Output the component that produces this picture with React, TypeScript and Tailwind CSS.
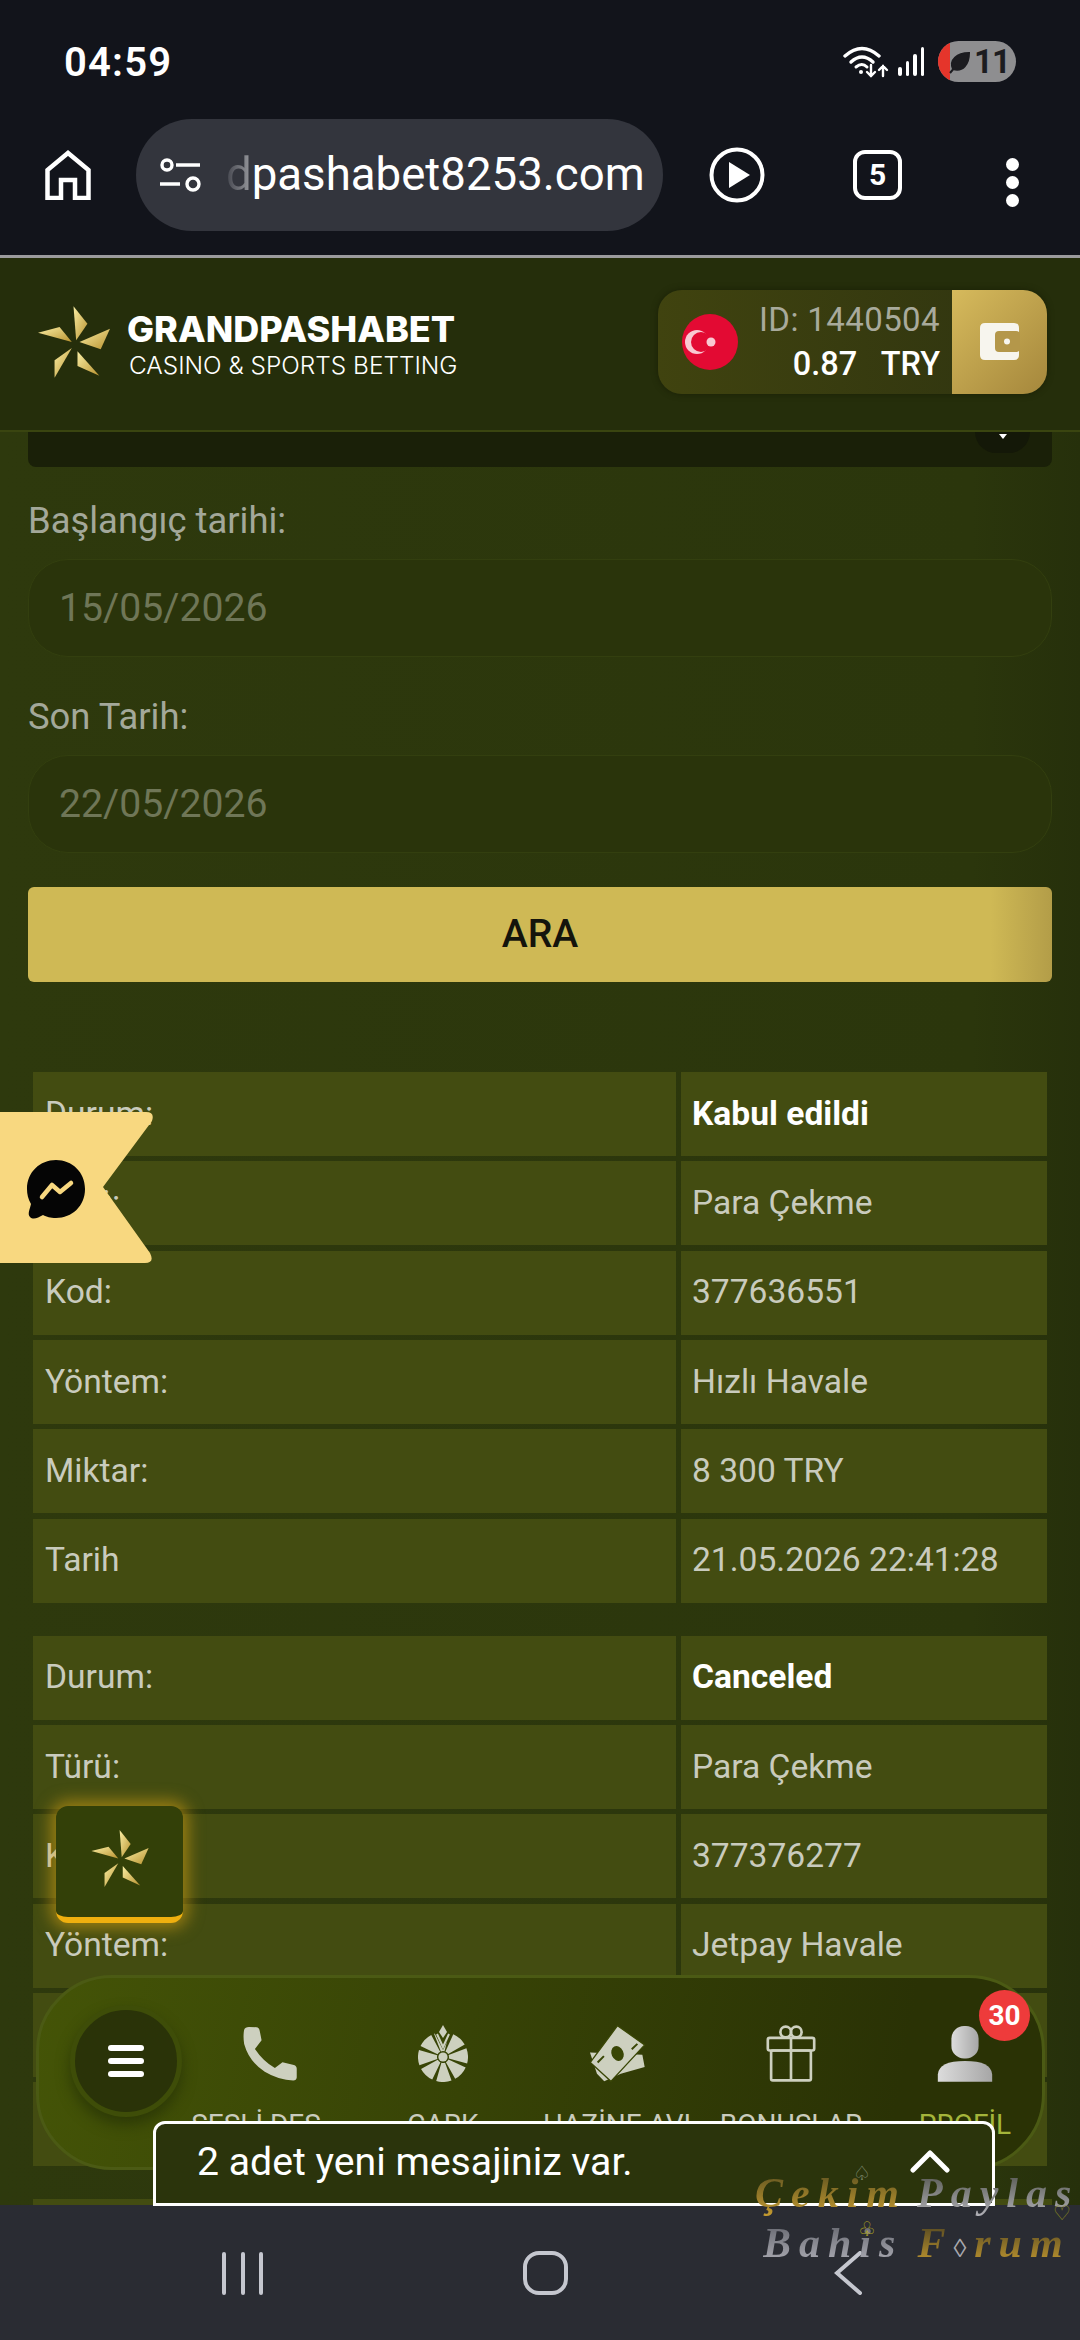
import React from 'react';

const rows1 = [
  ['Durum:', 'Kabul edildi'],
  ['Türü:', 'Para Çekme'],
  ['Kod:', '377636551'],
  ['Yöntem:', 'Hızlı Havale'],
  ['Miktar:', '8 300 TRY'],
  ['Tarih', '21.05.2026 22:41:28'],
];

const rows2 = [
  ['Durum:', 'Canceled'],
  ['Türü:', 'Para Çekme'],
  ['Kod:', '377376277'],
  ['Yöntem:', 'Jetpay Havale'],
  ['Miktar:', '8 300 TRY'],
  ['Tarih', '20.05.2026 18:12:40'],
];

const Star: React.FC<{ id: string; className: string }> = ({ id, className }) => (
  <svg viewBox="113 82 217 216" className={className}>
    <defs>
      <linearGradient id={id} x1="0" y1="0" x2="1" y2="1">
        <stop offset="0" stopColor="#fbefa5" />
        <stop offset="1" stopColor="#b8922f" />
      </linearGradient>
    </defs>
    <g fill={`url(#${id})`}>
      <polygon points="220,82 262,135 228,185" />
      <polygon points="330,150 302,212 238,190" />
      <polygon points="232,218 298,292 232,262" />
      <polygon points="215,208 163,298 163,245" />
      <polygon points="113,162 178,145 215,190" />
    </g>
  </svg>
);

const Table: React.FC<{ rows: string[][] }> = ({ rows }) => (
  <div className="grid grid-cols-[643px_366px] gap-x-[5px] gap-y-[5.33px] auto-rows-[84px]">
    {rows.map((row, i) => (
      <React.Fragment key={row[0]}>
        <div className="flex items-center bg-[#434c11] pl-[12px] text-[33.6px] text-[#c9cbbd]">{row[0]}</div>
        <div
          className={
            i === 0
              ? 'flex items-center bg-[#434c11] pl-[11px] text-[33.6px] font-bold text-white'
              : 'flex items-center bg-[#434c11] pl-[11px] text-[33.6px] text-[#c9cbbd]'
          }
        >
          {row[1]}
        </div>
      </React.Fragment>
    ))}
  </div>
);

const PhoneIcon = () => (
  <svg viewBox="655 130 180 180" className="h-[57px] w-[57px]">
    <path
      d="M665 145 Q668 136 680 136 L704 137 Q712 138 714 148 L720 178 L699 206 Q725 245 762 266 L786 248 L822 256 Q831 259 831 268 L831 296 Q830 305 820 305 Q775 305 730 278 Q680 245 665 190 Q661 165 665 145 Z"
      fill="#cdd0bf"
    />
  </svg>
);

const WheelIcon = () => (
  <svg viewBox="0 0 50 57" className="h-[57px] w-[50px]">
    <circle cx="25" cy="32" r="15.5" fill="none" stroke="#cdd0bf" strokeWidth="19" strokeDasharray="9.6 2.57" transform="rotate(-111 25 32)" />
    <circle cx="25" cy="32" r="4.6" fill="#cdd0bf" />
    <path d="M15 5 L25 25 L35 5 Z" fill="#394605" />
    <path d="M25 0 L29 7 L25 13 L21 7 Z" fill="#cdd0bf" />
    <path d="M19 9 L25 22 L31 9" fill="none" stroke="#cdd0bf" strokeWidth="2" />
  </svg>
);

const MoneyIcon = () => (
  <svg viewBox="140 135 170 172" className="h-[57px] w-[57px]">
    <polygon points="142,218 300,225 307,262 235,282 185,305 163,282" fill="#cdd0bf" />
    <polygon points="225,137 307,195 205,305 143,248" fill="#cdd0bf" stroke="#394605" strokeWidth="4" />
    <ellipse cx="225" cy="221" rx="18" ry="23" fill="#394605" transform="rotate(-25 225 221)" />
    <path d="M165 248 L184 229 M268 208 L285 192" stroke="#394605" strokeWidth="6" />
  </svg>
);

const GiftIcon = () => (
  <svg viewBox="655 135 150 172" className="h-[57px] w-[50px]" fill="none" stroke="#cdd0bf" strokeWidth="8" strokeLinejoin="round">
    <rect x="660" y="174" width="140" height="38" rx="6" />
    <rect x="670" y="212" width="120" height="90" rx="5" />
    <path d="M730 174 V302" />
    <circle cx="714" cy="156" r="16" />
    <circle cx="746" cy="156" r="16" />
  </svg>
);

const PersonIcon = () => (
  <svg viewBox="1145 135 168 172" className="h-[57px] w-[56px]">
    <defs>
      <linearGradient id="person" x1="0" y1="0" x2="1" y2="0">
        <stop offset="0" stopColor="#dcdcdc" />
        <stop offset="1" stopColor="#a6a6a6" />
      </linearGradient>
    </defs>
    <rect x="1188" y="138" width="82" height="98" rx="38" fill="url(#person)" />
    <path d="M1147 306 V284 Q1150 244 1229 244 Q1308 244 1311 284 V306 Z" fill="url(#person)" />
  </svg>
);

const navItems = [
  { label: 'SESLİ DES', icon: <PhoneIcon />, color: 'text-[#c9cbbd]', shift: 'mr-[26px]' },
  { label: 'ÇARK', icon: <WheelIcon />, color: 'text-[#c9cbbd]', shift: 'mr-0' },
  { label: 'HAZİNE AVI', icon: <MoneyIcon />, color: 'text-[#c9cbbd]', shift: 'mr-0' },
  { label: 'BONUSLAR', icon: <GiftIcon />, color: 'text-[#c9cbbd]', shift: 'mr-0' },
  { label: 'PROFİL', icon: <PersonIcon />, color: 'text-[#a4b53a]', shift: 'mr-0' },
];

export default function App() {
  return (
    <div className="relative flex h-[2340px] w-[1080px] flex-col overflow-hidden bg-[linear-gradient(90deg,#2e390d,#2b360c_90%,#26300b)] font-['Roboto',sans-serif]">
      {/* Status bar */}
      <div className="flex h-[119px] shrink-0 items-start justify-between bg-[#12141b] pl-[64px] pr-[64px] pt-[41px]">
        <span className="text-[40px] font-semibold leading-[44px] tracking-[1.2px] text-white">04:59</span>
        <div className="flex items-center">
          <svg viewBox="0 0 46 34" className="h-[34px] w-[46px]" fill="none" stroke="white" strokeLinecap="round">
            <path d="M2 11 Q19 -4 36 11" strokeWidth="3.4" />
            <path d="M8 17 Q19 7 30 17" strokeWidth="3.4" />
            <path d="M13 22 Q19 17 24 22" strokeWidth="3" />
            <circle cx="18" cy="27" r="2" fill="white" stroke="none" />
            <path d="M28 20 V31 M24 27 L28 31 L32 27" strokeWidth="2.4" />
            <path d="M40 31 V21 M36 25 L40 21 L44 25" strokeWidth="2.4" />
          </svg>
          <div className="ml-[9px] flex h-[29px] items-end gap-[4px]">
            <div className="h-[9px] w-[3.5px] rounded-sm bg-white" />
            <div className="h-[15px] w-[3.5px] rounded-sm bg-white" />
            <div className="h-[22px] w-[3.5px] rounded-sm bg-white" />
            <div className="h-[29px] w-[3.5px] rounded-sm bg-white" />
          </div>
          <div className="relative ml-[14px] flex h-[41px] w-[78px] items-center overflow-hidden rounded-full bg-[#8e8e90]">
            <div className="h-full w-[12px] bg-[#e5352b]" />
            <svg viewBox="0 0 24 24" className="absolute left-[9px] top-[9px] h-[24px] w-[24px]">
              <path d="M3 23 L8 17 M6 19 C2 10 10 3 22 3 C22 14 16 22 6 19 Z" fill="#1c1c20" stroke="#1c1c20" strokeWidth="2" />
            </svg>
            <span className="absolute left-[36px] top-0 text-[33px] font-bold leading-[41px] tracking-[-1px] text-[#1c1c20]">11</span>
          </div>
        </div>
      </div>

      {/* Browser bar */}
      <div className="flex h-[136px] shrink-0 items-start bg-[#12141b]">
        <svg viewBox="0 0 46 50" className="ml-[45px] mt-[31px] h-[50px] w-[46px]" fill="none" stroke="white" strokeWidth="4.5">
          <path d="M2.5 48 V20 L23 3 L43.5 20 V48 H30 V30 H16 V48 Z" />
        </svg>
        <div className="relative ml-[45px] flex h-[112px] w-[527px] items-center overflow-hidden rounded-full bg-[#33353d] pl-[24px]">
          <svg viewBox="0 0 41 34" className="h-[34px] w-[41px] shrink-0" fill="none" stroke="white" strokeWidth="3.4">
            <circle cx="7" cy="7" r="5" />
            <path d="M16 7 H40" />
            <path d="M0 26 H20" />
            <circle cx="33" cy="26" r="6" />
          </svg>
          <span className="ml-[25px] whitespace-nowrap text-[45.6px] leading-none text-white">
            <span className="bg-[linear-gradient(90deg,#44464e,#9a9ba0)] bg-clip-text text-transparent">d</span>
            pashabet8253.com
          </span>
        </div>
        <svg viewBox="0 0 56 56" className="ml-[46px] mt-[28px] h-[56px] w-[56px]">
          <circle cx="28" cy="28" r="25.5" fill="none" stroke="white" strokeWidth="4" />
          <path d="M20 15 L41 28 L20 41 Z" fill="white" />
        </svg>
        <div className="ml-[88px] mt-[31px] flex h-[50px] w-[49px] items-center justify-center rounded-[12px] border-[4px] border-white text-[30px] font-bold leading-none text-white">
          5
        </div>
        <div className="ml-[104px] mt-[39px] flex flex-col gap-[5px]">
          <div className="h-[13px] w-[13px] rounded-full bg-white" />
          <div className="h-[13px] w-[13px] rounded-full bg-white" />
          <div className="h-[13px] w-[13px] rounded-full bg-white" />
        </div>
      </div>
      <div className="h-[3px] shrink-0 bg-[#9b9b9d]" />

      {/* Site header */}
      <div className="flex h-[174px] shrink-0 items-center justify-between border-b-2 border-[#3a4510] bg-[#252e0b] pb-[5px] pl-[38px] pr-[33px]">
        <div className="flex items-center gap-[17px]">
          <Star id="logoStar" className="h-[72px] w-[72px]" />
          <div className="mt-[6px] flex flex-col font-['Inter',sans-serif] text-white">
            <span className="text-[36px] font-extrabold leading-[40px]">GRANDPASHABET</span>
            <span className="ml-[2px] text-[24.4px] font-light leading-[32px]">CASINO &amp; SPORTS BETTING</span>
          </div>
        </div>
        <div className="flex h-[104px] w-[389px] overflow-hidden rounded-[24px] bg-[linear-gradient(90deg,#40430f,#2f3410)] shadow-[0_0_6px_#1a2006]">
          <div className="flex flex-1 items-center justify-between pl-[24px] pr-[12px]">
            <svg viewBox="0 0 56 56" className="h-[56px] w-[56px]">
              <circle cx="28" cy="28" r="28" fill="#e30a33" />
              <circle cx="15" cy="28" r="12" fill="#f9c9d2" />
              <circle cx="19" cy="28" r="10" fill="#e30a33" />
              <circle cx="29" cy="28" r="4.5" fill="#f9c9d2" />
            </svg>
            <div className="flex flex-col items-end">
              <span className="text-[33px] leading-[44px] tracking-[0.4px] text-[#a8aa9c]">ID: 1440504</span>
              <span className="whitespace-pre text-[32.5px] font-medium leading-[44px] text-white">0.87{'   '}TRY</span>
            </div>
          </div>
          <div className="flex w-[95px] items-center justify-center bg-[linear-gradient(135deg,#d6ba5c,#a5873c)]">
            <svg viewBox="0 0 40 37" className="h-[37px] w-[40px]">
              <path d="M5 0 H34 Q39 0 39 5 V32 Q39 37 34 37 H5 Q0 37 0 32 V5 Q0 0 5 0 Z" fill="#f7f5ee" />
              <rect x="15" y="8" width="25" height="21" rx="4" fill="#b4974a" />
              <circle cx="27" cy="18.5" r="3" fill="#f7f5ee" />
            </svg>
          </div>
        </div>
      </div>

      {/* Page content */}
      <div className="flex min-h-0 flex-1 flex-col overflow-hidden px-[28px]">
        <div className="relative h-[35px] shrink-0 rounded-b-[8px] bg-[#1a2008]">
          <div className="absolute right-[22px] top-0 flex h-[21px] w-[55px] justify-center rounded-b-full bg-[#141808]">
            <div className="mt-[2px] h-0 w-0 border-x-[4px] border-t-[5px] border-x-transparent border-t-white" />
          </div>
        </div>
        <label className="mt-[32px] text-[36.4px] leading-[44px] text-[#a3a89a]">Başlangıç tarihi:</label>
        <div className="mt-[16px] flex h-[98px] shrink-0 items-center rounded-[40px] border border-[#333f0f] bg-[#2a340b] pl-[30px] text-[39.2px] text-[#6f7657]">
          15/05/2026
        </div>
        <label className="mt-[38px] text-[36.4px] leading-[44px] text-[#a3a89a]">Son Tarih:</label>
        <div className="mt-[16px] flex h-[98px] shrink-0 items-center rounded-[40px] border border-[#333f0f] bg-[#2a340b] pl-[30px] text-[39.2px] text-[#6f7657]">
          22/05/2026
        </div>
        <button className="mt-[34px] flex h-[95px] shrink-0 items-center justify-center rounded-[6px] bg-[linear-gradient(90deg,#cfb955_94%,#b39d48)] text-[39.2px] font-medium text-[#14140c]">
          ARA
        </button>
        <div className="ml-[5px] mt-[90px] flex flex-col gap-[33px]">
          <Table rows={rows1} />
          <Table rows={rows2} />
          <div className="h-[84px] bg-[#434c11]" />
        </div>
      </div>

      {/* Android nav bar */}
      <div className="relative z-10 flex h-[135px] shrink-0 items-start bg-[#2a2c33]">
        <div className="ml-[222px] mt-[47px] flex h-[43px] w-[41px] justify-between">
          <div className="h-full w-[4px] rounded-full bg-[#c5c7cf]" />
          <div className="h-full w-[4px] rounded-full bg-[#c5c7cf]" />
          <div className="h-full w-[4px] rounded-full bg-[#c5c7cf]" />
        </div>
        <div className="ml-[260px] mt-[46px] h-[44px] w-[45px] rounded-[16px] border-[4px] border-[#c5c7cf]" />
        <svg viewBox="0 0 28 44" className="ml-[266px] mt-[46px] h-[44px] w-[28px]" fill="none" stroke="#c5c7cf" strokeWidth="4" strokeLinecap="round">
          <path d="M26 2 L3 22 L26 42" />
        </svg>
      </div>

      {/* Messenger ribbon */}
      <svg viewBox="0 0 154 152" className="absolute left-0 top-[1112px] z-20 h-[152px] w-[154px]">
        <path d="M0 0 H146 Q155 0 152 9 L103 75 L150 141 Q155 151 145 151 H0 Z" fill="#f8d880" />
        <path d="M56 48 C72 48 85 60 85 77 C85 94 72 106 56 106 C50 106 47 105 43 103 C38 106 33 108 30 105 C27 102 30 97 31 92 C28 87 27 82 27 77 C27 60 40 48 56 48 Z" fill="#050505" />
        <path d="M42 85 L52 73 L60 80 L71 71" fill="none" stroke="#f8d880" strokeWidth="4.5" strokeLinecap="round" strokeLinejoin="round" />
      </svg>

      {/* Floating logo button */}
      <div className="absolute left-[56px] top-[1806px] z-20 flex h-[117px] w-[127px] items-center justify-center rounded-[12px] border-b-[6px] border-[#efb00f] bg-[#334008] pb-[6px] shadow-[0_0_16px_5px_rgba(230,170,20,0.55)]">
        <Star id="fabStar" className="h-[57px] w-[58px]" />
      </div>

      {/* Bottom menu */}
      <div className="absolute left-[36px] top-[1975px] z-20 flex h-[195px] w-[1009px] items-start rounded-[76px] border-[3px] border-[#4b5a14] bg-[linear-gradient(100deg,#445407,#2a3205_85%)] pl-[31px]">
        <div className="mt-[27px] flex h-[112px] w-[112px] shrink-0 flex-col items-center justify-center gap-[7px] rounded-full border-[5px] border-[#3e4d08] bg-[#2a3308] shadow-[0_8px_14px_rgba(30,40,5,0.55)]">
          <div className="h-[6px] w-[36px] rounded-full bg-white" />
          <div className="h-[6px] w-[36px] rounded-full bg-white" />
          <div className="h-[6px] w-[36px] rounded-full bg-white" />
        </div>
        <div className="flex">
          {navItems.map((item) => (
            <div key={item.label} className="flex w-[174px] flex-col items-center pt-[47px]">
              {item.icon}
              <span className={`mt-[29px] whitespace-nowrap text-[28px] leading-[28px] ${item.color} ${item.shift}`}>{item.label}</span>
            </div>
          ))}
        </div>
        <div className="absolute left-[940px] top-[12px] flex h-[51px] w-[51px] items-center justify-center rounded-full bg-[#ee3b3b] text-[28px] font-bold text-white">
          30
        </div>
      </div>

      {/* Message toast */}
      <div className="absolute left-[153px] top-[2121px] z-20 flex h-[85px] w-[842px] items-start justify-between rounded-t-[12px] border-[3px] border-white bg-[#2b340c] pl-[41px] pr-[42px] pt-[16px]">
        <span className="text-[39.2px] leading-[44px] text-white">2 adet yeni mesajiniz var.</span>
        <svg viewBox="0 0 40 24" className="mt-[9px] h-[24px] w-[40px]" fill="none" stroke="white" strokeWidth="5" strokeLinecap="round" strokeLinejoin="round">
          <path d="M3 21 L20 4 L37 21" />
        </svg>
      </div>

      {/* Watermark */}
      <div className="absolute left-[755px] top-[2165px] z-30 h-[100px] w-[325px] font-['Liberation_Serif',serif] text-[42px] font-bold italic leading-[56px] tracking-[8px]">
        <div className="whitespace-nowrap">
          <span className="bg-[linear-gradient(180deg,#5a5020,#c49a30)] bg-clip-text text-transparent">Çekim</span>
          <span className="ml-[10px] bg-[linear-gradient(180deg,#50524a,#b0b0b6)] bg-clip-text text-transparent">Paylas</span>
        </div>
        <div className="absolute left-[8px] top-[50px] whitespace-nowrap">
          <span className="bg-[linear-gradient(180deg,#60626a,#b0b0b8)] bg-clip-text text-transparent">Bahis</span>
          <span className="ml-[14px] bg-[linear-gradient(180deg,#4a4020,#c49a30)] bg-clip-text text-transparent">F</span>
          <span className="text-[26px] font-normal not-italic text-[#a8a8ae]">◊</span>
          <span className="bg-[linear-gradient(180deg,#4a4020,#c49a30)] bg-clip-text text-transparent">rum</span>
        </div>
        <span className="absolute left-[98px] top-[-6px] text-[20px] font-normal not-italic leading-[28px] text-[#7d8a6c]">♤</span>
        <span className="absolute left-[298px] top-[34px] text-[20px] font-normal not-italic leading-[28px] text-[#8a8a20]">♡</span>
        <span className="absolute left-[103px] top-[50px] text-[20px] font-normal not-italic leading-[28px] text-[#b0a820]">♧</span>
      </div>
    </div>
  );
}
